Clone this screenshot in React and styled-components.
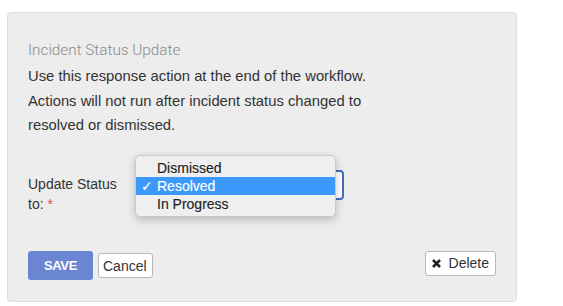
import React from 'react';
import styled, { createGlobalStyle } from 'styled-components';

const GlobalStyle = createGlobalStyle`
  body {
    margin: 0;
    background: #fff;
    font-family: "Liberation Sans", Arial, sans-serif;
  }
`;

const Panel = styled.div`
  box-sizing: border-box;
  margin: 12px 0 0 7px;
  width: 510px;
  height: 290px;
  background: #ededed;
  border: 1px solid #dedede;
  border-radius: 4px;
  padding: 27px 20px 0 20px;
  display: flex;
  flex-direction: column;
`;

const Title = styled.div`
  font-family: Roboto, "Liberation Sans", sans-serif;
  font-weight: 300;
  font-size: 15.3px;
  line-height: 20px;
  color: #8a8a8a;
`;

const Description = styled.p`
  margin: 4px 0 0;
  font-size: 14.8px;
  line-height: 24.5px;
  color: #333;
  width: 380px;
`;

const FormRow = styled.div`
  display: flex;
  align-items: flex-start;
  margin-top: 32px;
`;

const Label = styled.label`
  width: 107px;
  font-size: 14px;
  line-height: 20px;
  color: #333;
  padding-top: 4px;
  span {
    color: #d9534f;
  }
`;

const SelectWrap = styled.div`
  position: relative;
`;

const SelectBox = styled.div`
  box-sizing: border-box;
  width: 209px;
  height: 30px;
  background: #fff;
  border: 2px solid #3f6fc0;
  border-radius: 4px;
`;

const Menu = styled.ul`
  position: absolute;
  left: 0;
  top: -15px;
  box-sizing: border-box;
  width: 201px;
  margin: 0;
  padding: 3px 0;
  list-style: none;
  background: #efefef;
  border: 1px solid #c9c9c9;
  border-radius: 5px;
  box-shadow: 0 3px 8px rgba(0, 0, 0, 0.22);
`;

const MenuItem = styled.li`
  position: relative;
  height: 18px;
  line-height: 18px;
  padding-left: 21px;
  font-size: 14px;
  color: ${p => (p.$active ? '#fff' : '#222')};
  background: ${p => (p.$active ? '#3b99fc' : 'transparent')};
  font-family: "Liberation Sans", Arial, sans-serif;
  -webkit-text-stroke: 0.15px ${p => (p.$active ? '#fff' : '#222')};
`;

const Check = styled.span`
  position: absolute;
  left: 5px;
  top: 0;
  font-family: "DejaVu Sans", sans-serif;
  font-size: 14px;
`;

const ButtonRow = styled.div`
  display: flex;
  align-items: center;
  margin-top: 37px;
`;

const SaveButton = styled.button`
  width: 65px;
  height: 29px;
  border: none;
  border-radius: 3px;
  background: #6a86d3;
  color: #fff;
  font-family: "Liberation Sans", Arial, sans-serif;
  font-weight: bold;
  font-size: 13px;
  letter-spacing: -0.3px;
  padding: 0;
`;

const PlainButton = styled.button`
  box-sizing: border-box;
  height: 25px;
  margin-left: ${p => p.$gap || '0'};
  padding: 0 5px 0 4px;
  background: #fff;
  border: 1px solid #b9b9b9;
  border-radius: 3px;
  color: #333;
  font-family: "Liberation Sans", Arial, sans-serif;
  font-size: 14px;
  display: inline-flex;
  align-items: center;
  gap: 7px;
`;

const Spacer = styled.div`
  flex: 1;
`;

export default function App() {
  return (
    <>
      <GlobalStyle />
      <Panel>
        <Title>Incident Status Update</Title>
        <Description>
          Use this response action at the end of the workflow. Actions will not run after incident
          status changed to resolved or dismissed.
        </Description>
        <FormRow>
          <Label>
            Update Status
            <br />
            to: <span>*</span>
          </Label>
          <SelectWrap>
            <SelectBox />
            <Menu>
              <MenuItem>Dismissed</MenuItem>
              <MenuItem $active>
                <Check>✓</Check>Resolved
              </MenuItem>
              <MenuItem>In Progress</MenuItem>
            </Menu>
          </SelectWrap>
        </FormRow>
        <ButtonRow>
          <SaveButton>SAVE</SaveButton>
          <PlainButton $gap="5px" style={{ marginTop: 1 }}>Cancel</PlainButton>
          <Spacer />
          <PlainButton style={{ marginTop: -4, padding: '0 6px 0 5px' }}>
            <svg width="11" height="11" viewBox="0 0 11 11">
              <path d="M2 2 L9 9 M9 2 L2 9" stroke="#222" strokeWidth="2.6" strokeLinecap="butt" />
            </svg>
            Delete
          </PlainButton>
        </ButtonRow>
      </Panel>
    </>
  );
}
